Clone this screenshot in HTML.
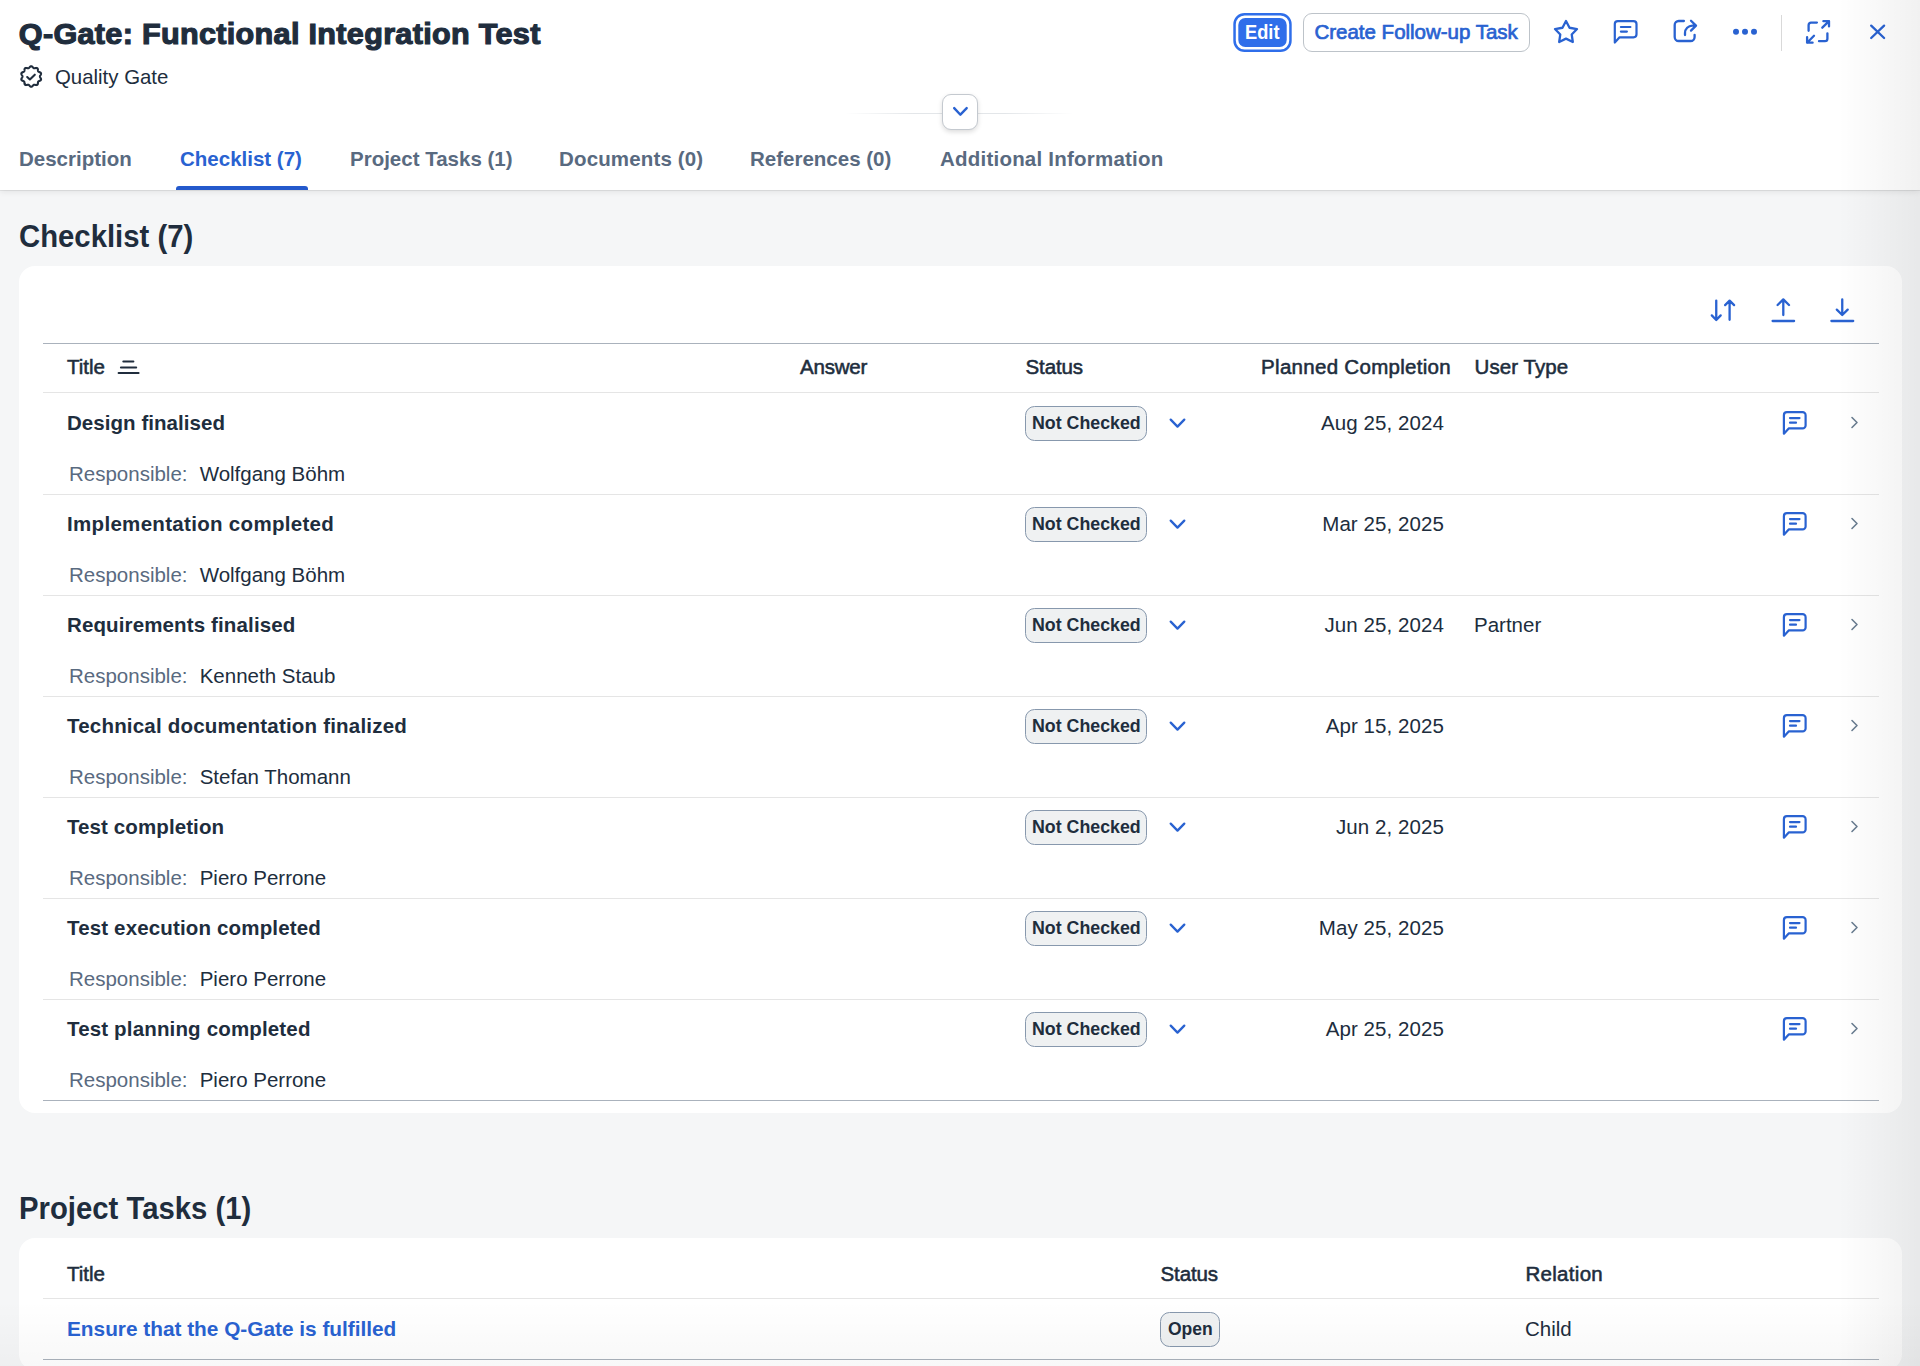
<!DOCTYPE html>
<html><head><meta charset="utf-8">
<style>
*{box-sizing:border-box;margin:0;padding:0}
html,body{width:1920px;height:1366px;overflow:hidden}
body{background:#f5f6f7;font-family:"Liberation Sans",sans-serif;color:#202d3d;position:relative}
.a{position:absolute;white-space:nowrap;line-height:1}
#hdr{position:absolute;left:0;top:0;width:1920px;height:190px;background:#fff;box-shadow:0 1px 0 rgba(0,0,0,0.07),0 2px 6px rgba(0,0,0,0.08)}
.card{position:absolute;left:19px;width:1883px;background:#fff;border-radius:16px}
.hl{position:absolute;height:1px}
.pill{position:absolute;border:1px solid #8798ad;background:#eff1f2;border-radius:9.5px}
#ov{position:absolute;left:0;top:0;width:1920px;height:1366px;overflow:visible}
</style></head><body>
<div id="hdr"></div>
<div class="a" style="left:18.8px;top:17.70px;font-size:30.6px;font-weight:700;color:#202d3d;-webkit-text-stroke:1.2px #202d3d;letter-spacing:0.31px;transform:scaleY(0.955);transform-origin:0 25.9px">Q-Gate: Functional Integration Test</div>
<div class="a" style="left:55px;top:66.93px;font-size:20.4px;color:#202d3d;">Quality Gate</div>
<div class="a" style="left:19px;top:148.95px;font-size:20.5px;font-weight:700;color:#596a80;">Description</div>
<div class="a" style="left:180px;top:148.95px;font-size:20.5px;font-weight:700;color:#2962d1;">Checklist (7)</div>
<div class="a" style="left:350px;top:148.95px;font-size:20.5px;font-weight:700;color:#596a80;">Project Tasks (1)</div>
<div class="a" style="left:559px;top:148.95px;font-size:20.5px;font-weight:700;color:#596a80;letter-spacing:0.15px">Documents (0)</div>
<div class="a" style="left:750px;top:148.95px;font-size:20.5px;font-weight:700;color:#596a80;">References (0)</div>
<div class="a" style="left:940px;top:148.95px;font-size:20.5px;font-weight:700;color:#596a80;letter-spacing:0.22px">Additional Information</div>
<div style="position:absolute;left:176px;top:186px;width:132px;height:4px;background:#2459cc;border-radius:3px 3px 0 0"></div>
<div style="position:absolute;left:845px;top:113px;width:228px;height:1px;background:linear-gradient(to right,rgba(220,223,226,0),#e3e6e9 30%,#e3e6e9 70%,rgba(220,223,226,0))"></div>
<div style="position:absolute;left:942px;top:94px;width:36px;height:36px;border:1px solid #c4c9cf;border-radius:9px;background:#fff;box-shadow:0 2px 5px rgba(0,0,0,0.14)"></div>
<svg style="position:absolute;left:0;top:0" width="1920" height="60"><rect x="1234.55" y="14.15" width="55.9" height="36.6" rx="10" fill="none" stroke="#2f6eea" stroke-width="2.5"/><rect x="1238.3" y="17.9" width="48.4" height="29.1" rx="7" fill="#2f6eea"/></svg>
<div class="a" style="left:1245px;top:21.65px;font-size:20.5px;font-weight:700;color:#fff;transform:scaleX(0.89);transform-origin:0 0">Edit</div>
<div style="position:absolute;left:1303px;top:13px;width:227px;height:39px;border:1px solid #bdc3c9;border-radius:9px;background:#fff"></div>
<div class="a" style="left:1314.5px;top:21.75px;font-size:20.5px;color:#2962d1;-webkit-text-stroke:0.7px #2962d1;letter-spacing:-0.015px">Create Follow-up Task</div>
<div style="position:absolute;left:1781px;top:15px;width:1px;height:36px;background:#d9d9d9"></div>
<div class="a" style="left:19px;top:222.20px;font-size:29.3px;font-weight:700;color:#202d3d;transform:scaleY(1.06);transform-origin:0 24.8px">Checklist (7)</div>
<div class="card" style="top:266px;height:847px"></div>
<div class="hl" style="left:43px;top:343px;width:1836px;background:#aab2bc"></div>
<div class="hl" style="left:43px;top:392px;width:1836px;background:#e5e5e5"></div>
<div class="a" style="left:67px;top:357.15px;font-size:20.5px;color:#202d3d;-webkit-text-stroke:0.55px #202d3d;letter-spacing:0.000px">Title</div>
<div class="a" style="left:800px;top:357.15px;font-size:20.5px;color:#202d3d;-webkit-text-stroke:0.55px #202d3d;letter-spacing:-0.200px">Answer</div>
<div class="a" style="left:1025.5px;top:357.15px;font-size:20.5px;color:#202d3d;-webkit-text-stroke:0.55px #202d3d;letter-spacing:-0.120px">Status</div>
<div class="a" style="right:469px;top:357.15px;font-size:20.5px;color:#202d3d;text-align:right;-webkit-text-stroke:0.55px #202d3d;letter-spacing:0.294px">Planned Completion</div>
<div class="a" style="left:1474.5px;top:357.15px;font-size:20.5px;color:#202d3d;-webkit-text-stroke:0.55px #202d3d;letter-spacing:0.075px">User Type</div>
<div class="a" style="left:67px;top:412.75px;font-size:20.5px;font-weight:700;color:#202d3d;letter-spacing:0.050px">Design finalised</div>
<div class="a" style="left:69px;top:464.25px;font-size:20.5px;color:#596a80;">Responsible:</div>
<div class="a" style="left:199.7px;top:464.25px;font-size:20.5px;color:#202d3d;">Wolfgang Böhm</div>
<div class="pill" style="left:1025px;top:406px;width:122px;height:35px"></div>
<div class="a" style="left:1032px;top:415.13px;font-size:17.8px;font-weight:700;color:#202d3d;">Not Checked</div>
<div class="a" style="right:476px;top:412.75px;font-size:20.5px;color:#202d3d;text-align:right;letter-spacing:0.08px">Aug 25, 2024</div>
<div class="hl" style="left:43px;top:494px;width:1836px;background:#e5e5e5"></div>
<div class="a" style="left:67px;top:513.75px;font-size:20.5px;font-weight:700;color:#202d3d;letter-spacing:0.310px">Implementation completed</div>
<div class="a" style="left:69px;top:565.25px;font-size:20.5px;color:#596a80;">Responsible:</div>
<div class="a" style="left:199.7px;top:565.25px;font-size:20.5px;color:#202d3d;">Wolfgang Böhm</div>
<div class="pill" style="left:1025px;top:507px;width:122px;height:35px"></div>
<div class="a" style="left:1032px;top:516.13px;font-size:17.8px;font-weight:700;color:#202d3d;">Not Checked</div>
<div class="a" style="right:476px;top:513.75px;font-size:20.5px;color:#202d3d;text-align:right;letter-spacing:0.08px">Mar 25, 2025</div>
<div class="hl" style="left:43px;top:595px;width:1836px;background:#e5e5e5"></div>
<div class="a" style="left:67px;top:614.75px;font-size:20.5px;font-weight:700;color:#202d3d;letter-spacing:0.130px">Requirements finalised</div>
<div class="a" style="left:69px;top:666.25px;font-size:20.5px;color:#596a80;">Responsible:</div>
<div class="a" style="left:199.7px;top:666.25px;font-size:20.5px;color:#202d3d;">Kenneth Staub</div>
<div class="pill" style="left:1025px;top:608px;width:122px;height:35px"></div>
<div class="a" style="left:1032px;top:617.13px;font-size:17.8px;font-weight:700;color:#202d3d;">Not Checked</div>
<div class="a" style="right:476px;top:614.75px;font-size:20.5px;color:#202d3d;text-align:right;letter-spacing:0.08px">Jun 25, 2024</div>
<div class="a" style="left:1474px;top:614.75px;font-size:20.5px;color:#202d3d;">Partner</div>
<div class="hl" style="left:43px;top:696px;width:1836px;background:#e5e5e5"></div>
<div class="a" style="left:67px;top:715.75px;font-size:20.5px;font-weight:700;color:#202d3d;letter-spacing:0.200px">Technical documentation finalized</div>
<div class="a" style="left:69px;top:767.25px;font-size:20.5px;color:#596a80;">Responsible:</div>
<div class="a" style="left:199.7px;top:767.25px;font-size:20.5px;color:#202d3d;">Stefan Thomann</div>
<div class="pill" style="left:1025px;top:709px;width:122px;height:35px"></div>
<div class="a" style="left:1032px;top:718.13px;font-size:17.8px;font-weight:700;color:#202d3d;">Not Checked</div>
<div class="a" style="right:476px;top:715.75px;font-size:20.5px;color:#202d3d;text-align:right;letter-spacing:0.08px">Apr 15, 2025</div>
<div class="hl" style="left:43px;top:797px;width:1836px;background:#e5e5e5"></div>
<div class="a" style="left:67px;top:816.75px;font-size:20.5px;font-weight:700;color:#202d3d;letter-spacing:0.100px">Test completion</div>
<div class="a" style="left:69px;top:868.25px;font-size:20.5px;color:#596a80;">Responsible:</div>
<div class="a" style="left:199.7px;top:868.25px;font-size:20.5px;color:#202d3d;">Piero Perrone</div>
<div class="pill" style="left:1025px;top:810px;width:122px;height:35px"></div>
<div class="a" style="left:1032px;top:819.13px;font-size:17.8px;font-weight:700;color:#202d3d;">Not Checked</div>
<div class="a" style="right:476px;top:816.75px;font-size:20.5px;color:#202d3d;text-align:right;letter-spacing:0.08px">Jun 2, 2025</div>
<div class="hl" style="left:43px;top:898px;width:1836px;background:#e5e5e5"></div>
<div class="a" style="left:67px;top:917.75px;font-size:20.5px;font-weight:700;color:#202d3d;letter-spacing:0.156px">Test execution completed</div>
<div class="a" style="left:69px;top:969.25px;font-size:20.5px;color:#596a80;">Responsible:</div>
<div class="a" style="left:199.7px;top:969.25px;font-size:20.5px;color:#202d3d;">Piero Perrone</div>
<div class="pill" style="left:1025px;top:911px;width:122px;height:35px"></div>
<div class="a" style="left:1032px;top:920.13px;font-size:17.8px;font-weight:700;color:#202d3d;">Not Checked</div>
<div class="a" style="right:476px;top:917.75px;font-size:20.5px;color:#202d3d;text-align:right;letter-spacing:0.08px">May 25, 2025</div>
<div class="hl" style="left:43px;top:999px;width:1836px;background:#e5e5e5"></div>
<div class="a" style="left:67px;top:1018.75px;font-size:20.5px;font-weight:700;color:#202d3d;letter-spacing:0.159px">Test planning completed</div>
<div class="a" style="left:69px;top:1070.25px;font-size:20.5px;color:#596a80;">Responsible:</div>
<div class="a" style="left:199.7px;top:1070.25px;font-size:20.5px;color:#202d3d;">Piero Perrone</div>
<div class="pill" style="left:1025px;top:1012px;width:122px;height:35px"></div>
<div class="a" style="left:1032px;top:1021.13px;font-size:17.8px;font-weight:700;color:#202d3d;">Not Checked</div>
<div class="a" style="right:476px;top:1018.75px;font-size:20.5px;color:#202d3d;text-align:right;letter-spacing:0.08px">Apr 25, 2025</div>
<div class="hl" style="left:43px;top:1100px;width:1836px;background:#aab2bc"></div>
<div class="a" style="left:19px;top:1193.70px;font-size:29.3px;font-weight:700;color:#202d3d;transform:scaleY(1.06);transform-origin:0 24.8px">Project Tasks (1)</div>
<div class="card" style="top:1238px;height:132px"></div>
<div class="a" style="left:67px;top:1264.15px;font-size:20.5px;color:#202d3d;-webkit-text-stroke:0.55px #202d3d;letter-spacing:0.000px">Title</div>
<div class="a" style="left:1160.5px;top:1264.45px;font-size:20.5px;color:#202d3d;-webkit-text-stroke:0.55px #202d3d;letter-spacing:-0.120px">Status</div>
<div class="a" style="left:1525.5px;top:1264.45px;font-size:20.5px;color:#202d3d;-webkit-text-stroke:0.55px #202d3d;letter-spacing:0.286px">Relation</div>
<div class="hl" style="left:43px;top:1298px;width:1836px;background:#e5e5e5"></div>
<div class="a" style="left:67px;top:1319.09px;font-size:20.8px;font-weight:700;color:#2962d1;">Ensure that the Q-Gate is fulfilled</div>
<div class="pill" style="left:1160px;top:1312px;width:60px;height:35px"></div>
<div class="a" style="left:1168px;top:1321.39px;font-size:17.5px;font-weight:700;color:#202d3d;">Open</div>
<div class="a" style="left:1525px;top:1319.35px;font-size:20.5px;color:#202d3d;">Child</div>
<div class="hl" style="left:43px;top:1359px;width:1836px;background:#aab2bc"></div>
<svg id="ov" width="1920" height="1366" viewBox="0 0 1920 1366" fill="none" stroke-linecap="round" stroke-linejoin="round"><path d="M39.90,76.50 L39.92,76.73 L40.00,76.96 L40.11,77.20 L40.25,77.45 L40.41,77.71 L40.58,77.99 L40.74,78.27 L40.88,78.56 L40.99,78.85 L41.05,79.14 L41.05,79.42 L41.00,79.68 L40.88,79.93 L40.72,80.15 L40.50,80.35 L40.24,80.53 L39.96,80.68 L39.66,80.81 L39.37,80.93 L39.08,81.05 L38.82,81.17 L38.59,81.30 L38.39,81.44 L38.24,81.61 L38.12,81.81 L38.04,82.04 L37.99,82.30 L37.96,82.59 L37.94,82.90 L37.92,83.22 L37.88,83.54 L37.82,83.86 L37.74,84.15 L37.61,84.42 L37.45,84.65 L37.25,84.83 L37.02,84.97 L36.75,85.05 L36.46,85.08 L36.15,85.07 L35.83,85.03 L35.51,84.96 L35.20,84.89 L34.90,84.81 L34.62,84.75 L34.36,84.72 L34.11,84.73 L33.89,84.77 L33.68,84.87 L33.48,85.01 L33.29,85.19 L33.09,85.40 L32.89,85.64 L32.69,85.88 L32.47,86.12 L32.23,86.35 L31.99,86.53 L31.73,86.68 L31.47,86.77 L31.20,86.80 L30.93,86.77 L30.67,86.68 L30.41,86.53 L30.17,86.35 L29.93,86.12 L29.71,85.88 L29.51,85.64 L29.31,85.40 L29.11,85.19 L28.92,85.01 L28.72,84.87 L28.51,84.77 L28.29,84.73 L28.04,84.72 L27.78,84.75 L27.50,84.81 L27.20,84.89 L26.89,84.96 L26.57,85.03 L26.25,85.07 L25.94,85.08 L25.65,85.05 L25.38,84.97 L25.15,84.83 L24.95,84.65 L24.79,84.42 L24.66,84.15 L24.58,83.86 L24.52,83.54 L24.48,83.22 L24.46,82.90 L24.44,82.59 L24.41,82.30 L24.36,82.04 L24.28,81.81 L24.16,81.61 L24.01,81.44 L23.81,81.30 L23.58,81.17 L23.32,81.05 L23.03,80.93 L22.74,80.81 L22.44,80.68 L22.16,80.53 L21.90,80.35 L21.68,80.15 L21.52,79.93 L21.40,79.68 L21.35,79.42 L21.35,79.14 L21.41,78.85 L21.52,78.56 L21.66,78.27 L21.82,77.99 L21.99,77.71 L22.15,77.45 L22.29,77.20 L22.40,76.96 L22.48,76.73 L22.50,76.50 L22.48,76.27 L22.40,76.04 L22.29,75.80 L22.15,75.55 L21.99,75.29 L21.82,75.01 L21.66,74.73 L21.52,74.44 L21.41,74.15 L21.35,73.86 L21.35,73.58 L21.40,73.32 L21.52,73.07 L21.68,72.85 L21.90,72.65 L22.16,72.47 L22.44,72.32 L22.74,72.19 L23.03,72.07 L23.32,71.95 L23.58,71.83 L23.81,71.70 L24.01,71.56 L24.16,71.39 L24.28,71.19 L24.36,70.96 L24.41,70.70 L24.44,70.41 L24.46,70.10 L24.48,69.78 L24.52,69.46 L24.58,69.14 L24.66,68.85 L24.79,68.58 L24.95,68.35 L25.15,68.17 L25.38,68.03 L25.65,67.95 L25.94,67.92 L26.25,67.93 L26.57,67.97 L26.89,68.04 L27.20,68.11 L27.50,68.19 L27.78,68.25 L28.04,68.28 L28.29,68.27 L28.51,68.23 L28.72,68.13 L28.92,67.99 L29.11,67.81 L29.31,67.60 L29.51,67.36 L29.71,67.12 L29.93,66.88 L30.17,66.65 L30.41,66.47 L30.67,66.32 L30.93,66.23 L31.20,66.20 L31.47,66.23 L31.73,66.32 L31.99,66.47 L32.23,66.65 L32.47,66.88 L32.69,67.12 L32.89,67.36 L33.09,67.60 L33.29,67.81 L33.48,67.99 L33.68,68.13 L33.89,68.23 L34.11,68.27 L34.36,68.28 L34.62,68.25 L34.90,68.19 L35.20,68.11 L35.51,68.04 L35.83,67.97 L36.15,67.93 L36.46,67.92 L36.75,67.95 L37.02,68.03 L37.25,68.17 L37.45,68.35 L37.61,68.58 L37.74,68.85 L37.82,69.14 L37.88,69.46 L37.92,69.78 L37.94,70.10 L37.96,70.41 L37.99,70.70 L38.04,70.96 L38.12,71.19 L38.24,71.39 L38.39,71.56 L38.59,71.70 L38.82,71.83 L39.08,71.95 L39.37,72.07 L39.66,72.19 L39.96,72.32 L40.24,72.47 L40.50,72.65 L40.72,72.85 L40.88,73.07 L41.00,73.32 L41.05,73.58 L41.05,73.86 L40.99,74.15 L40.88,74.44 L40.74,74.73 L40.58,75.01 L40.41,75.29 L40.25,75.55 L40.11,75.80 L40.00,76.04 L39.92,76.27Z" stroke="#202d3d" stroke-width="2.1"/><path d="M27.2,77 L29.9,79.5 L34.8,74.7" stroke="#202d3d" stroke-width="2.1"/><path d="M1566.00,21.00 L1569.53,27.75 L1577.03,29.02 L1571.71,34.45 L1572.82,41.98 L1566.00,38.60 L1559.18,41.98 L1560.29,34.45 L1554.97,29.02 L1562.47,27.75Z" stroke="#2962d1" stroke-width="2.3"/><path d="M1619.60,37.30 H1633.50 A3.0,3.0 0 0 0 1636.50,34.30 V24.10 A3.0,3.0 0 0 0 1633.50,21.10 H1617.80 A3.0,3.0 0 0 0 1614.80,24.10 V42.60 Z" stroke="#2962d1" stroke-width="2.2"/><path d="M1620.90,27.00 H1630.40 M1620.90,31.55 H1626.90" stroke="#2962d1" stroke-width="2.2"/><path d="M1683.9,21 H1678.7 A4,4 0 0 0 1674.7,25 V37 A4,4 0 0 0 1678.7,41 H1690.6 A4,4 0 0 0 1694.6,37 V34.8" stroke="#2962d1" stroke-width="2.3"/><path d="M1685,35.1 V33 A7.4,7.4 0 0 1 1692.4,25.6 H1695.8 M1691,20.7 L1696,25.6 L1691,30.6" stroke="#2962d1" stroke-width="2.3"/><circle cx="1736" cy="31.8" r="3" fill="#2962d1" stroke="none"/><circle cx="1745" cy="31.8" r="3" fill="#2962d1" stroke="none"/><circle cx="1754" cy="31.8" r="3" fill="#2962d1" stroke="none"/><path d="M1816.9,22.6 H1811 A2.4,2.4 0 0 0 1808.6,25.1 V30.8 M1819,41.2 H1825 A2.4,2.4 0 0 0 1827.4,38.8 V33.3" stroke="#2962d1" stroke-width="2.3"/><path d="M1823.4,21.2 H1829 V26.4 M1829,21.2 L1822.3,27.7 M1807.1,37.2 V42.7 H1812.6 M1807.1,42.7 L1814,35.7" stroke="#2962d1" stroke-width="2.3"/><path d="M1871.2,25.6 L1884.1,38 M1884.1,25.6 L1871.2,38" stroke="#2962d1" stroke-width="2.3"/><path d="M954.2,108.1 L960.4,114.7 L966.7,108.1" stroke="#2962d1" stroke-width="2.4"/><path d="M123.3,361.6 H133.4 M120.9,367.4 H136.2 M118.6,373 H138.6" stroke="#202d3d" stroke-width="2"/><path d="M1716.25,300.6 V320 M1711.8,315.4 L1716.25,320 L1720.7,315.4 M1729.6,300.6 V319.8 M1725.1,305.1 L1729.6,300.6 L1734.1,305.1" stroke="#2962d1" stroke-width="2.3"/><path d="M1783.3,299.4 V315 M1777.6,305 L1783.3,299.4 L1789,305 M1772.6,321 H1794.1" stroke="#2962d1" stroke-width="2.3"/><path d="M1842.25,299.4 V315 M1836.8,309.6 L1842.25,315 L1847.7,309.6 M1831.4,321 H1853.2" stroke="#2962d1" stroke-width="2.3"/><path d="M1170.7,419.6 L1177.5,426.6 L1184.3,419.6" stroke="#2962d1" stroke-width="2.3"/><path d="M1788.70,428.40 H1802.60 A3.0,3.0 0 0 0 1805.60,425.40 V415.20 A3.0,3.0 0 0 0 1802.60,412.20 H1786.90 A3.0,3.0 0 0 0 1783.90,415.20 V433.70 Z" stroke="#2962d1" stroke-width="2.2"/><path d="M1790.00,418.10 H1799.50 M1790.00,422.65 H1796.00" stroke="#2962d1" stroke-width="2.2"/><path d="M1852,417.5 L1857,422.5 L1852,427.5" stroke="#6a7d91" stroke-width="1.6"/><path d="M1170.7,520.6 L1177.5,527.6 L1184.3,520.6" stroke="#2962d1" stroke-width="2.3"/><path d="M1788.70,529.40 H1802.60 A3.0,3.0 0 0 0 1805.60,526.40 V516.20 A3.0,3.0 0 0 0 1802.60,513.20 H1786.90 A3.0,3.0 0 0 0 1783.90,516.20 V534.70 Z" stroke="#2962d1" stroke-width="2.2"/><path d="M1790.00,519.10 H1799.50 M1790.00,523.65 H1796.00" stroke="#2962d1" stroke-width="2.2"/><path d="M1852,518.5 L1857,523.5 L1852,528.5" stroke="#6a7d91" stroke-width="1.6"/><path d="M1170.7,621.6 L1177.5,628.6 L1184.3,621.6" stroke="#2962d1" stroke-width="2.3"/><path d="M1788.70,630.40 H1802.60 A3.0,3.0 0 0 0 1805.60,627.40 V617.20 A3.0,3.0 0 0 0 1802.60,614.20 H1786.90 A3.0,3.0 0 0 0 1783.90,617.20 V635.70 Z" stroke="#2962d1" stroke-width="2.2"/><path d="M1790.00,620.10 H1799.50 M1790.00,624.65 H1796.00" stroke="#2962d1" stroke-width="2.2"/><path d="M1852,619.5 L1857,624.5 L1852,629.5" stroke="#6a7d91" stroke-width="1.6"/><path d="M1170.7,722.6 L1177.5,729.6 L1184.3,722.6" stroke="#2962d1" stroke-width="2.3"/><path d="M1788.70,731.40 H1802.60 A3.0,3.0 0 0 0 1805.60,728.40 V718.20 A3.0,3.0 0 0 0 1802.60,715.20 H1786.90 A3.0,3.0 0 0 0 1783.90,718.20 V736.70 Z" stroke="#2962d1" stroke-width="2.2"/><path d="M1790.00,721.10 H1799.50 M1790.00,725.65 H1796.00" stroke="#2962d1" stroke-width="2.2"/><path d="M1852,720.5 L1857,725.5 L1852,730.5" stroke="#6a7d91" stroke-width="1.6"/><path d="M1170.7,823.6 L1177.5,830.6 L1184.3,823.6" stroke="#2962d1" stroke-width="2.3"/><path d="M1788.70,832.40 H1802.60 A3.0,3.0 0 0 0 1805.60,829.40 V819.20 A3.0,3.0 0 0 0 1802.60,816.20 H1786.90 A3.0,3.0 0 0 0 1783.90,819.20 V837.70 Z" stroke="#2962d1" stroke-width="2.2"/><path d="M1790.00,822.10 H1799.50 M1790.00,826.65 H1796.00" stroke="#2962d1" stroke-width="2.2"/><path d="M1852,821.5 L1857,826.5 L1852,831.5" stroke="#6a7d91" stroke-width="1.6"/><path d="M1170.7,924.6 L1177.5,931.6 L1184.3,924.6" stroke="#2962d1" stroke-width="2.3"/><path d="M1788.70,933.40 H1802.60 A3.0,3.0 0 0 0 1805.60,930.40 V920.20 A3.0,3.0 0 0 0 1802.60,917.20 H1786.90 A3.0,3.0 0 0 0 1783.90,920.20 V938.70 Z" stroke="#2962d1" stroke-width="2.2"/><path d="M1790.00,923.10 H1799.50 M1790.00,927.65 H1796.00" stroke="#2962d1" stroke-width="2.2"/><path d="M1852,922.5 L1857,927.5 L1852,932.5" stroke="#6a7d91" stroke-width="1.6"/><path d="M1170.7,1025.6 L1177.5,1032.6 L1184.3,1025.6" stroke="#2962d1" stroke-width="2.3"/><path d="M1788.70,1034.40 H1802.60 A3.0,3.0 0 0 0 1805.60,1031.40 V1021.20 A3.0,3.0 0 0 0 1802.60,1018.20 H1786.90 A3.0,3.0 0 0 0 1783.90,1021.20 V1039.70 Z" stroke="#2962d1" stroke-width="2.2"/><path d="M1790.00,1024.10 H1799.50 M1790.00,1028.65 H1796.00" stroke="#2962d1" stroke-width="2.2"/><path d="M1852,1023.5 L1857,1028.5 L1852,1033.5" stroke="#6a7d91" stroke-width="1.6"/></svg>
<div style="position:absolute;left:1838px;top:0;width:82px;height:1366px;background:linear-gradient(to right,rgba(0,0,0,0),rgba(0,0,0,0.055))"></div>
<div style="position:absolute;left:0;top:1300px;width:1920px;height:66px;background:linear-gradient(to bottom,rgba(0,0,0,0),rgba(0,0,0,0.028))"></div>
</body></html>
